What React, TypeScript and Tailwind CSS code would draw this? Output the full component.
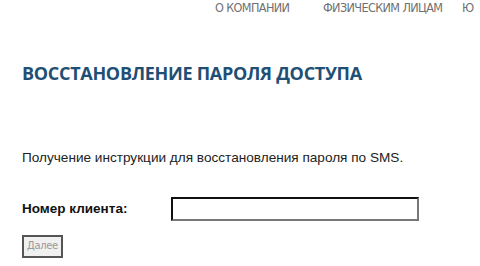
export default function App() {
  return (
    <div className="relative h-[266px] w-[480px] overflow-hidden bg-white">
      <nav className="flex h-[17px] items-center pl-[215px] font-['DejaVu_Sans_Condensed','Open_Sans',sans-serif] text-[12.5px] font-light leading-none tracking-[-0.6px] text-[#707070]">
        <span className="w-[108px] whitespace-nowrap">О КОМПАНИИ</span>
        <span className="w-[139px] whitespace-nowrap">ФИЗИЧЕСКИМ ЛИЦАМ</span>
        <span className="whitespace-nowrap">Ю</span>
      </nav>

      <div className="pl-[22px]">
        <h1 className="mt-[45px] whitespace-nowrap font-['Open_Sans',sans-serif] text-[18px] font-bold leading-[22px] tracking-[-0.3px] text-[#1f4f74]">
          ВОССТАНОВЛЕНИЕ ПАРОЛЯ ДОСТУПА
        </h1>

        <p className="mt-[66px] whitespace-nowrap font-['Liberation_Sans',Arial,sans-serif] text-[13.6px] leading-[16px] text-[#222]">
          Получение инструкции для восстановления пароля по SMS.
        </p>

        <div className="mt-[31px] flex h-[24px] items-center">
          <label className="w-[149px] whitespace-nowrap font-['Liberation_Sans',Arial,sans-serif] text-[13.5px] font-bold text-[#111]">
            Номер клиента:
          </label>
          <input
            type="text"
            className="h-[24px] w-[248px] border-2 border-t-[#111] border-l-[#111] border-r-[#777] border-b-[#777] bg-white outline-none"
          />
        </div>

        <button
          type="button"
          className="mt-[14px] h-[23px] w-[41px] border-2 border-[#555] bg-[#f0f0f0] font-['DejaVu_Sans_Condensed',sans-serif] text-[11px] tracking-[-0.3px] text-[#999]"
        >
          Далее
        </button>
      </div>
    </div>
  );
}
